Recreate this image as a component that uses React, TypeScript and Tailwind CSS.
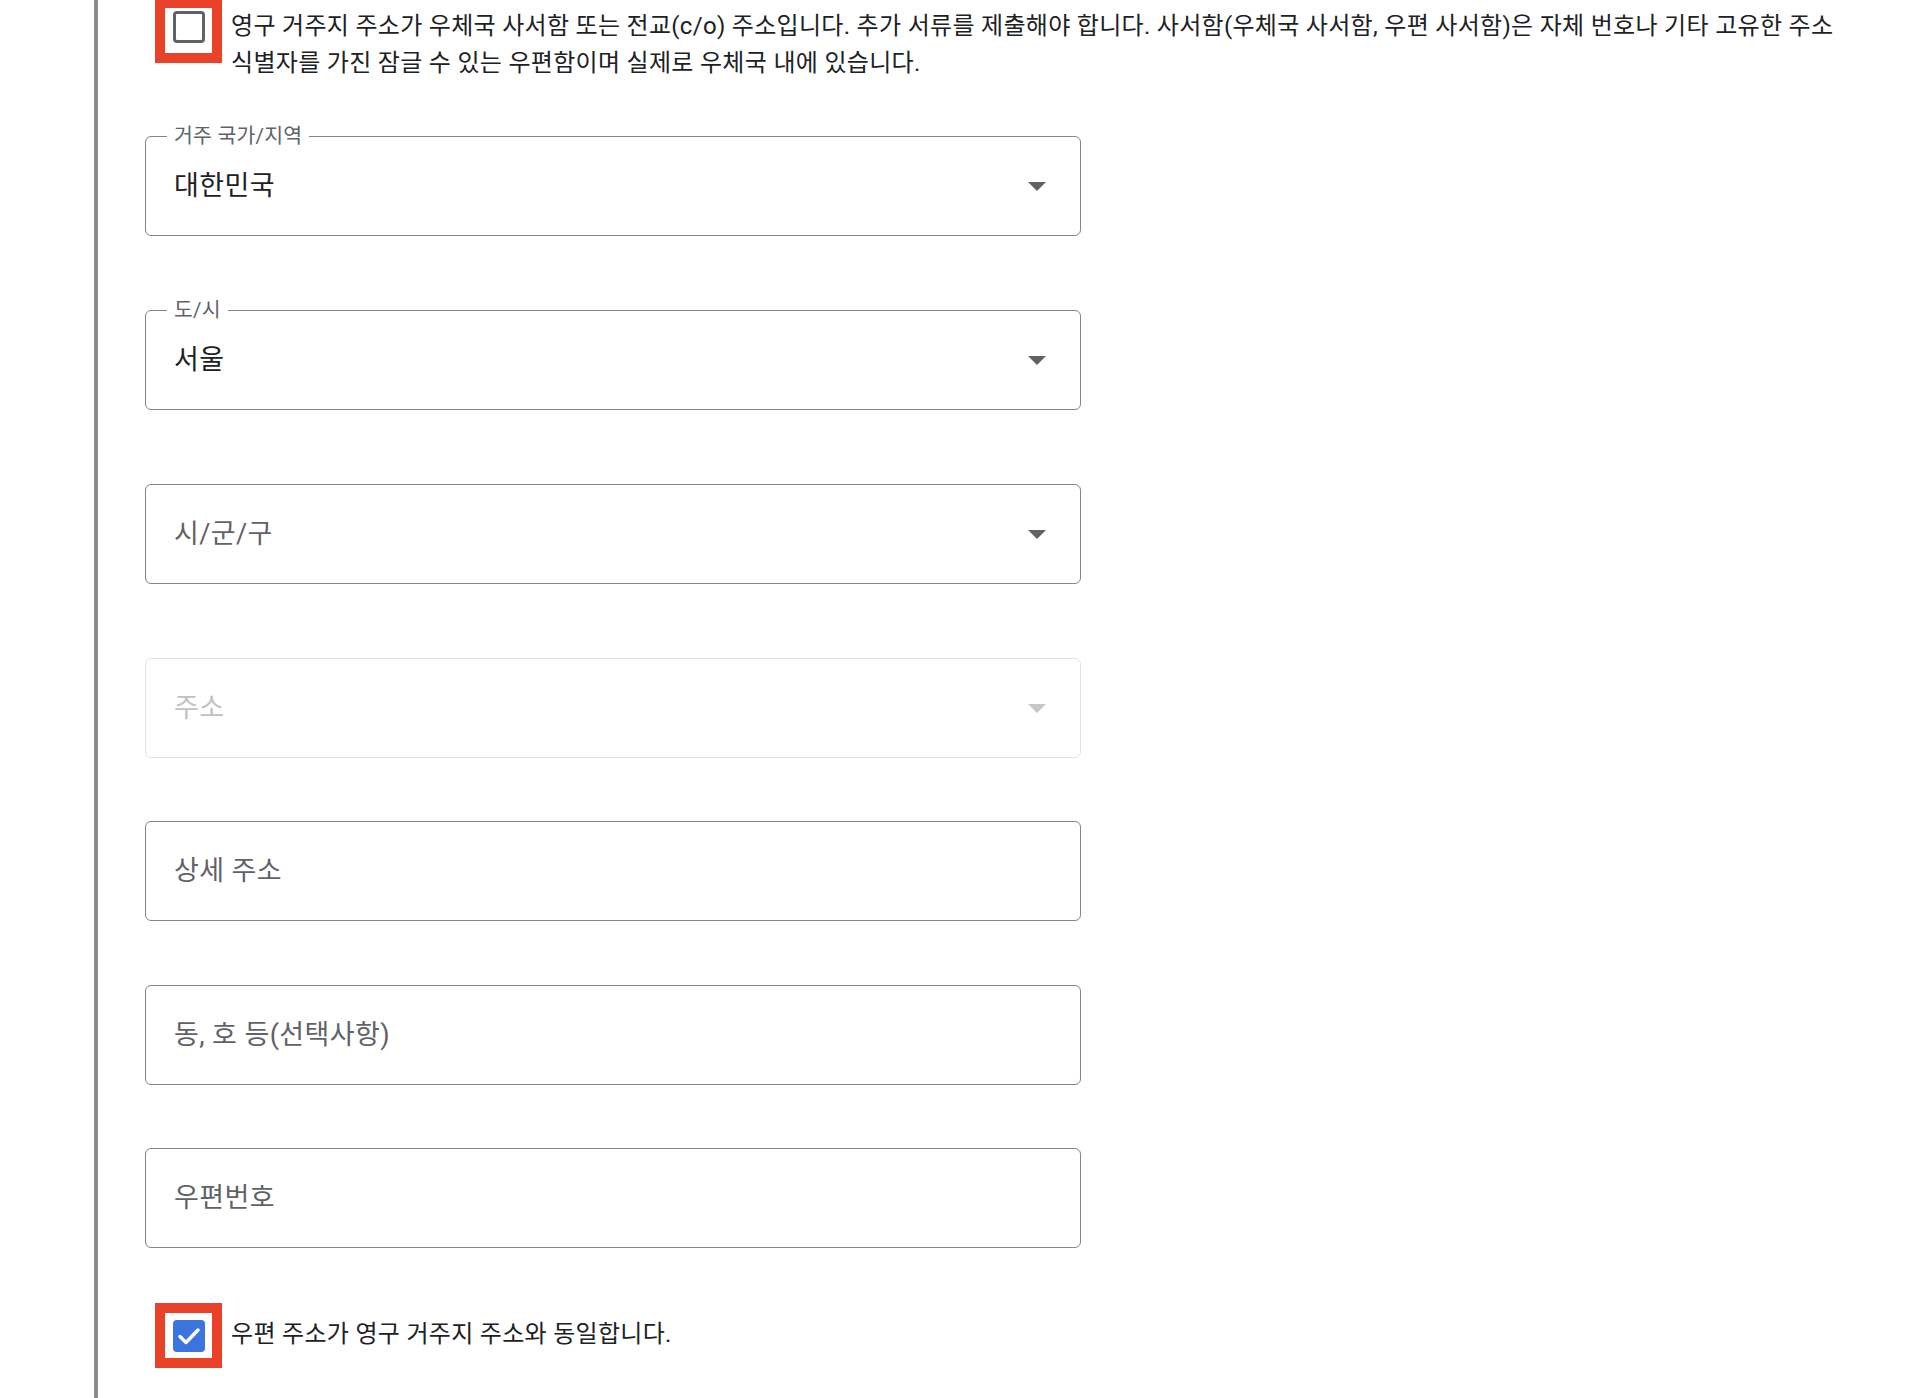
import React from "react";

const FONT = { fontFamily: "Roboto, 'Noto Sans CJK KR', sans-serif" };

function Arrow({ disabled }: { disabled?: boolean }) {
  return (
    <svg width="18" height="9" viewBox="0 0 18 9" className="shrink-0">
      <path d="M0 0 L18 0 L9 9 Z" fill={disabled ? "#c4c6c9" : "#5f6368"} />
    </svg>
  );
}

function Field({
  label,
  text,
  filled,
  select,
  disabled,
  className,
}: {
  label?: string;
  text: string;
  filled?: boolean;
  select?: boolean;
  disabled?: boolean;
  className: string;
}) {
  return (
    <div
      className={`relative flex h-[100px] w-[936px] items-center rounded-[6px] border pl-[28px] pr-[34px] ${
        disabled ? "border-[#e2e3e5]" : "border-[#80868b]"
      } ${className}`}
    >
      {label && (
        <span className="absolute -top-[13px] left-[21px] bg-white px-[7px] text-[20.5px] leading-[24px] tracking-[0.2px] text-[#5f6368]">
          {label}
        </span>
      )}
      <span
        className={`flex-1 text-[27px] leading-[32px] tracking-[0.4px] ${
          disabled ? "text-[#bfc1c4]" : filled ? "text-[#202124]" : "text-[#5f6368]"
        }`}
      >
        {text}
      </span>
      {select && <Arrow disabled={disabled} />}
    </div>
  );
}

export default function App() {
  return (
    <div className="flex min-h-screen bg-white" style={FONT}>
      <div className="ml-[94px] w-[4px] shrink-0 bg-[#8a8d91]" />
      <div className="flex-1 pl-[47px] pr-[50px]">
        <div className="flex items-start">
          <div className="ml-[10px] -mt-[2px] flex h-[65px] w-[67px] shrink-0 items-start justify-center border-[10px] border-[#ea4228] bg-white pt-[3px]">
            <div className="h-[32px] w-[32px] rounded-[4px] border-[3px] border-[#5f6368]" />
          </div>
          <p className="ml-[9px] pt-[8px] text-[24px] leading-[37px] tracking-[0.3px] text-[#202124] break-keep">
            영구 거주지 주소가 우체국 사서함 또는 전교(c/o) 주소입니다. 추가 서류를 제출해야 합니다. 사서함(우체국 사서함, 우편 사서함)은 자체 번호나 기타 고유한 주소 식별자를 가진 잠글 수 있는 우편함이며 실제로 우체국 내에 있습니다.
          </p>
        </div>

        <div className="mt-[54px] flex flex-col">
          <Field label="거주 국가/지역" text="대한민국" filled select className="mb-[74px]" />
          <Field label="도/시" text="서울" filled select className="mb-[74px]" />
          <Field text="시/군/구" select className="mb-[74px]" />
          <Field text="주소" select disabled className="mb-[63px]" />
          <Field text="상세 주소" className="mb-[64px]" />
          <Field text="동, 호 등(선택사항)" className="mb-[63px]" />
          <Field text="우편번호" className="" />
        </div>

        <div className="mt-[55px] flex items-center">
          <div className="ml-[10px] flex h-[65px] w-[67px] shrink-0 items-center justify-center border-[10px] border-[#ea4228] bg-white">
            <div className="flex h-[32px] w-[32px] items-center justify-center rounded-[4px] bg-[#3b74dd]">
              <svg width="32" height="32" viewBox="0 0 32 32">
                <path
                  d="M7 16.5 L13 22.5 L25 10"
                  fill="none"
                  stroke="white"
                  strokeWidth="3.5"
                  strokeLinecap="round"
                  strokeLinejoin="round"
                />
              </svg>
            </div>
          </div>
          <p className="ml-[9px] -mt-[2px] text-[24px] leading-[37px] tracking-[0.3px] text-[#202124]">
            우편 주소가 영구 거주지 주소와 동일합니다.
          </p>
        </div>
      </div>
    </div>
  );
}
